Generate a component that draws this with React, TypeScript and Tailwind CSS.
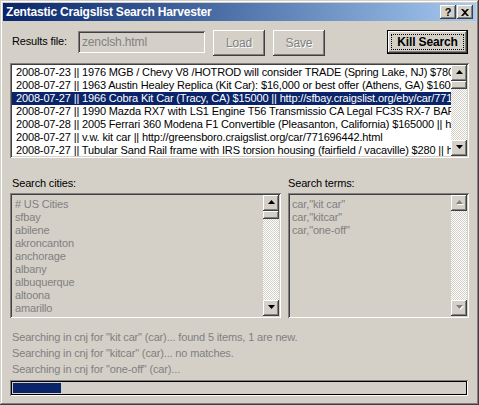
import React from 'react';

const font = "font-['Liberation_Sans',Arial,sans-serif]";

const sunken =
  'shadow-[inset_1px_1px_0_#808080,inset_-1px_-1px_0_#ffffff,inset_2px_2px_0_#404040,inset_-2px_-2px_0_#d4d0c8]';
const raised =
  'shadow-[inset_-1px_-1px_0_#404040,inset_1px_1px_0_#ffffff,inset_-2px_-2px_0_#808080,inset_2px_2px_0_#d4d0c8]';
const dither = 'bg-[repeating-conic-gradient(#ffffff_0_25%,#d4d0c8_0_50%)] bg-[length:2px_2px]';

const results = [
  '2008-07-23 || 1976 MGB / Chevy V8 /HOTROD will consider TRADE (Spring Lake, NJ) $780 || http://newjersey.craigslist.org',
  '2008-07-27 || 1963 Austin Healey Replica (Kit Car):  $16,000 or best offer (Athens, GA) $16000 || http://athensga',
  '2008-07-27 || 1966 Cobra Kit Car (Tracy, CA) $15000 || http://sfbay.craigslist.org/eby/car/771',
  '2008-07-27 || 1990 Mazda RX7 with LS1 Engine T56 Transmissio CA Legal FC3S RX-7 BAR || http',
  '2008-07-28 || 2005 Ferrari 360 Modena F1 Convertible (Pleasanton, California) $165000 || http://',
  '2008-07-27 || v.w. kit car || http://greensboro.craigslist.org/car/771696442.html',
  '2008-07-27 || Tubular Sand Rail frame with IRS torsion housing  (fairfield / vacaville) $280 || http://',
];

const cities = ['# US Cities', 'sfbay', 'abilene', 'akroncanton', 'anchorage', 'albany', 'albuquerque', 'altoona', 'amarillo'];
const terms = ['car,"kit car"', 'car,"kitcar"', 'car,"one-off"'];

const Arrow = ({ up, disabled }: { up?: boolean; disabled?: boolean }) => (
  <svg width="8" height="6" viewBox="0 0 8 6" className="block">
    {disabled && <polygon points={up ? '4.5,1 8,5 1,5' : '1,1 8,1 4.5,5'} fill="#ffffff" />}
    <polygon points={up ? '3.5,0 7,4 0,4' : '0,0 7,0 3.5,4'} fill={disabled ? '#808080' : '#000000'} />
  </svg>
);

const ScrollButton = ({ up, disabled }: { up?: boolean; disabled?: boolean }) => (
  <div className={`w-[16px] h-[16px] bg-[#d4d0c8] ${raised} flex items-center justify-center shrink-0 pl-[1px]`}>
    <Arrow up={up} disabled={disabled} />
  </div>
);

const Scrollbar = ({ thumb = true, disabled }: { thumb?: boolean; disabled?: boolean }) => (
  <div className="w-[16px] h-full flex flex-col shrink-0">
    <ScrollButton up disabled={disabled} />
    {thumb && <div className={`h-[8px] bg-[#d4d0c8] ${raised} shrink-0`} />}
    <div className={`flex-1 ${dither}`} />
    <ScrollButton disabled={disabled} />
  </div>
);

const Button = ({ label, disabled }: { label: string; disabled?: boolean }) => (
  <div
    className={`w-[52px] h-[26px] bg-[#d4d0c8] ${raised} flex items-center justify-center text-[12px] ${
      disabled ? 'text-[#808080] [text-shadow:1px_1px_0_#ffffff]' : 'text-black'
    }`}
  >
    {label}
  </div>
);

export default function App() {
  return (
    <div
      className={`w-[479px] h-[405px] bg-[#d4d0c8] p-[3px] flex flex-col ${font} shadow-[inset_-1px_-1px_0_#404040,inset_1px_1px_0_#d4d0c8,inset_-2px_-2px_0_#808080,inset_2px_2px_0_#ffffff] overflow-hidden`}
    >
      {/* title bar */}
      <div className="h-[18px] shrink-0 flex items-center bg-gradient-to-r from-[#0a246a] to-[#a6caf0] pl-[3px] pr-[3px]">
        <span className="text-white font-bold text-[12px] tracking-[-0.2px] leading-none">
          Zentastic Craigslist Search Harvester
        </span>
        <div className="ml-auto flex gap-[1px]">
          <div className={`w-[16px] h-[14px] bg-[#d4d0c8] ${raised} flex items-center justify-center text-[11px] font-bold leading-none text-black`}>
            ?
          </div>
          <div className={`w-[16px] h-[14px] bg-[#d4d0c8] ${raised} flex items-center justify-center`}>
            <svg width="8" height="7" viewBox="0 0 8 7">
              <path d="M0 0h2l2 2 2-2h2L5 3.5 8 7H6L4 5 2 7H0l3-3.5z" fill="#000" />
            </svg>
          </div>
        </div>
      </div>

      <div className="flex-1 flex flex-col px-[7px] text-[11px] tracking-[-0.15px] text-black">
        {/* results file row */}
        <div className="mt-[9px] h-[26px] flex items-start shrink-0">
          <span className="w-[68px] pl-[2px] pt-[5px] leading-[13px]">Results file:</span>
          <div className={`w-[127px] h-[22px] mt-[1px] bg-[#d4d0c8] ${sunken} flex items-center px-[4px] text-[#808080] text-[12px]`}>
            zenclsh.html
          </div>
          <div className="ml-[8px]">
            <Button label="Load" disabled />
          </div>
          <div className="ml-[8px]">
            <Button label="Save" disabled />
          </div>
          <div className="ml-auto mr-[1px] w-[81px] h-[24px] border border-black bg-[#d4d0c8]">
            <div className={`w-full h-full ${raised} p-[3px]`}>
              <div className="w-full h-full border border-dotted border-black flex items-center justify-center font-bold text-[12px]">
                Kill Search
              </div>
            </div>
          </div>
        </div>

        {/* results list */}
        <div className={`mt-[7px] h-[95px] shrink-0 bg-white ${sunken} p-[2px] flex`}>
          <div className="flex-1 overflow-hidden pt-[1px]">
            {results.map((r, i) => (
              <div
                key={i}
                className={`h-[13px] leading-[13px] pl-[4px] whitespace-nowrap ${i === 2 ? 'bg-[#0a246a] text-white' : ''}`}
              >
                {r}
              </div>
            ))}
          </div>
          <Scrollbar />
        </div>

        {/* labels */}
        <div className="mt-[19px] flex shrink-0 leading-[13px]">
          <span className="w-[278px] pl-[2px]">Search cities:</span>
          <span>Search terms:</span>
        </div>

        {/* lists */}
        <div className="mt-[3px] h-[125px] flex gap-[7px] shrink-0">
          <div className={`w-[271px] h-full bg-[#d4d0c8] ${sunken} p-[2px] flex`}>
            <div className="flex-1 overflow-hidden pt-[3px] pl-[3px] text-[#808080]">
              {cities.map((c) => (
                <div key={c} className="h-[13px] leading-[13px] whitespace-nowrap">
                  {c}
                </div>
              ))}
            </div>
            <Scrollbar />
          </div>
          <div className={`flex-1 h-full bg-[#d4d0c8] ${sunken} p-[2px] flex`}>
            <div className="flex-1 overflow-hidden pt-[3px] pl-[2px] text-[#808080]">
              {terms.map((t) => (
                <div key={t} className="h-[13px] leading-[13px] whitespace-nowrap">
                  {t}
                </div>
              ))}
            </div>
            <Scrollbar thumb={false} disabled />
          </div>
        </div>

        {/* status lines */}
        <div className="mt-[11px] pl-[2px] text-[#808080] shrink-0">
          <div className="h-[16px] leading-[16px]">Searching in cnj for "kit car" (car)... found 5 items, 1 are new.</div>
          <div className="h-[16px] leading-[16px]">Searching in cnj for "kitcar" (car)... no matches.</div>
          <div className="h-[16px] leading-[16px]">Searching in cnj for "one-off" (car)...</div>
        </div>

        {/* progress */}
        <div className="mt-[3px] w-[458px] h-[16px] shrink-0 bg-[#d4d0c8] shadow-[inset_1px_1px_0_#808080,inset_-1px_-1px_0_#ffffff,inset_2px_2px_0_#000000,inset_-2px_-2px_0_#000000] p-[3px]">
          <div className="w-[48px] h-full bg-[#0a246a]" />
        </div>
      </div>
    </div>
  );
}
